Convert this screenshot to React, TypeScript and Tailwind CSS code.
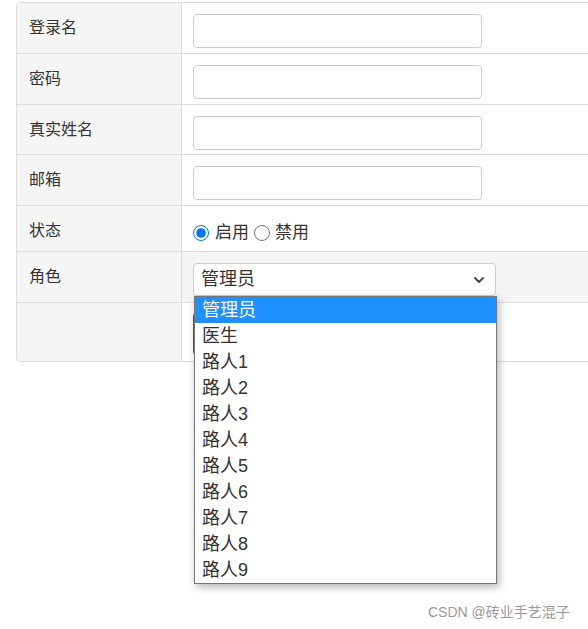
import { ChevronDown } from "lucide-react";

const font = { fontFamily: '"Liberation Sans", "Noto Sans CJK SC", sans-serif' };

const roles = ["管理员", "医生", "路人1", "路人2", "路人3", "路人4", "路人5", "路人6", "路人7", "路人8", "路人9"];

function Row({
  label,
  h,
  hover,
  last,
  children,
}: {
  label: string;
  h: string;
  hover?: boolean;
  last?: boolean;
  children?: React.ReactNode;
}) {
  return (
    <div className={`flex ${h} ${last ? "" : "border-b border-[#ddd]"} ${hover ? "bg-[#f5f5f5]" : ""}`}>
      <div className="w-[165px] shrink-0 bg-[#f5f5f5] border-r border-[#ddd] pl-[12px] pt-[13px] text-[16px] leading-6 text-[#333]">
        {label}
      </div>
      <div className="flex-1 pl-[11px]">{children}</div>
    </div>
  );
}

function TextInput() {
  return <div className="mt-[11px] w-[289px] h-[34px] rounded-[4px] border border-[#ccc] bg-white" />;
}

export default function App() {
  return (
    <div className="relative w-[588px] h-[629px] overflow-hidden bg-white" style={font}>
      <div className="ml-[16px] mt-[2px] w-[620px] border border-[#ddd] rounded-[4px] overflow-hidden">
        <Row label="登录名" h="h-[51px]">
          <TextInput />
        </Row>
        <Row label="密码" h="h-[51px]">
          <TextInput />
        </Row>
        <Row label="真实姓名" h="h-[50px]">
          <TextInput />
        </Row>
        <Row label="邮箱" h="h-[51px]">
          <TextInput />
        </Row>
        <Row label="状态" h="h-[46px]">
          <div className="flex items-center pt-[19px] text-[17px] leading-4 text-[#333]">
            <input type="radio" checked readOnly className="m-0 w-4 h-4 accent-[#0075ff]" />
            <span className="ml-[6px]">启用</span>
            <input type="radio" readOnly className="m-0 ml-[5px] w-4 h-4" />
            <span className="ml-[5px]">禁用</span>
          </div>
        </Row>
        <Row label="角色" h="h-[51px]" hover>
          <div className="mt-[11px] w-[303px] h-[33px] rounded-[4px] border border-[#ccc] bg-white flex items-center justify-between pl-[7px] pr-[8px] text-[18px] text-[#333]">
            <span>管理员</span>
            <ChevronDown size={16} strokeWidth={2.75} className="text-[#444]" />
          </div>
        </Row>
        <Row label="" h="h-[58px]" last>
          <div className="mt-[10px] w-[60px] h-[42px] rounded-[4px] bg-[#285e8e]" />
        </Row>
      </div>

      <div className="absolute left-[194px] top-[296px] w-[303px] border border-[#767676] bg-white shadow-[2px_3px_8px_rgba(0,0,0,0.3)] text-[18px] text-[#333]">
        {roles.map((r, i) => (
          <div
            key={r}
            className={`h-[26px] leading-[26px] pl-[7px] ${i === 0 ? "bg-[#1e90ff] text-white" : ""}`}
          >
            {r}
          </div>
        ))}
      </div>

      <div className="absolute left-[428px] top-[602px] text-[14px] text-[#999]">CSDN @砖业手艺混子</div>
    </div>
  );
}
